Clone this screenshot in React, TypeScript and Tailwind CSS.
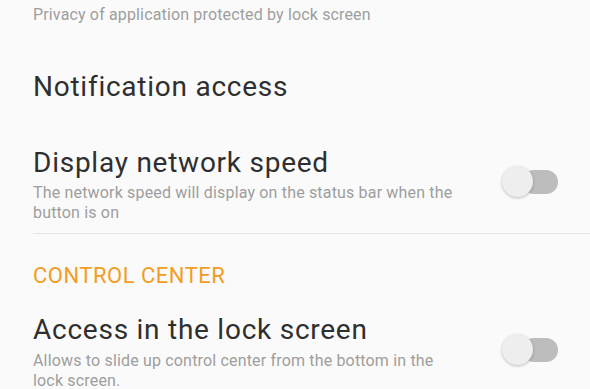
import React from 'react';

function Toggle() {
  return (
    <div className="relative w-[56px] h-[32px] shrink-0">
      <div className="absolute right-0 top-[4px] w-[36px] h-[24px] rounded-full bg-[#bdbdbd]" />
      <div className="absolute left-0 top-0 w-[31px] h-[31px] rounded-full bg-[#eeeeee] shadow-[0_1px_3px_rgba(0,0,0,0.25)]" />
    </div>
  );
}

export default function App() {
  return (
    <div
      className="w-[590px] h-[389px] overflow-hidden bg-[#fafafa] pl-[33px]"
      style={{ fontFamily: 'Roboto, "Noto Sans", sans-serif' }}
    >
      <div className="pt-[5px] text-[16px] leading-[20px] tracking-[0.15px] text-[#9e9e9e]">
        Privacy of application protected by lock screen
      </div>

      <div className="mt-[46px] text-[28px] leading-[32px] tracking-[0.75px] text-[#2f2f2f]">
        Notification access
      </div>

      <div className="mt-[44px] flex items-center border-b border-[#e6e6e6] pb-[10px]">
        <div className="w-[428px]">
          <div className="text-[28px] leading-[32px] tracking-[0.75px] text-[#2f2f2f]">Display network speed</div>
          <div className="mt-[4px] text-[16px] leading-[20px] tracking-[0.17px] text-[#9e9e9e]">
            The network speed will display on the status bar when the button is on
          </div>
        </div>
        <div className="ml-[41px] mt-[-6px]">
          <Toggle />
        </div>
      </div>

      <div className="mt-[30px] text-[22px] leading-[24px] tracking-[0.5px] text-[#f29d24]">CONTROL CENTER</div>

      <div className="mt-[26px] flex items-center">
        <div className="w-[428px]">
          <div className="text-[28px] leading-[32px] tracking-[0.75px] text-[#2f2f2f]">Access in the lock screen</div>
          <div className="mt-[5px] text-[16px] leading-[20px] tracking-[0.17px] text-[#9e9e9e]">
            Allows to slide up control center from the bottom in the lock screen.
          </div>
        </div>
        <div className="ml-[41px] mt-[-6px]">
          <Toggle />
        </div>
      </div>
    </div>
  );
}
